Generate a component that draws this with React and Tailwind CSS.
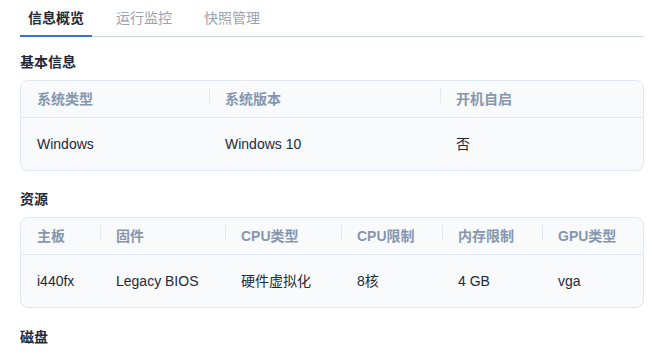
import React from "react";

const font = { fontFamily: '"Liberation Sans", "Noto Sans CJK SC", sans-serif' };

function Card({ cols, headers, values }) {
  return (
    <div className="rounded-lg border border-[#e2e8f0] bg-[#f8fafc]">
      <div className={`grid ${cols} h-[37px] border-b border-[#e2e8f0] items-center`}>
        {headers.map((h, i) => (
          <div key={h} className="relative px-4 text-[14px] leading-5 font-bold text-[#8696ad]">
            {i > 0 && <span className="absolute left-0 top-[-1px] h-[15px] w-px bg-[#e2e8f0]" />}
            {h}
          </div>
        ))}
      </div>
      <div className={`grid ${cols} h-[52px] items-center`}>
        {values.map((v, i) => (
          <div key={i} className="px-4 text-[14px] leading-5 text-[#1f2937]">
            {v}
          </div>
        ))}
      </div>
    </div>
  );
}

export default function App() {
  return (
    <div className="w-[666px] h-[356px] overflow-hidden bg-white pl-5 pr-[22px]" style={font}>
      <div className="flex border-b border-[#cbd5e1] gap-4">
        <div className="-mb-px px-2 pt-[10px] pb-[8px] leading-[17px] text-[14px] font-bold text-[#1f2937] border-b-2 border-[#2f72e0]">
          信息概览
        </div>
        <div className="-mb-px px-2 pt-[10px] pb-[8px] leading-[17px] text-[14px] text-[#9aa3ae] border-b-2 border-transparent">
          运行监控
        </div>
        <div className="-mb-px px-2 pt-[10px] pb-[8px] leading-[17px] text-[14px] text-[#9aa3ae] border-b-2 border-transparent">
          快照管理
        </div>
      </div>

      <div className="mt-[15px] mb-2 text-[14px] leading-5 font-bold text-[#1f2937]">基本信息</div>
      <Card
        cols="grid-cols-[188px_231px_1fr]"
        headers={["系统类型", "系统版本", "开机自启"]}
        values={["Windows", "Windows 10", "否"]}
      />

      <div className="mt-[18px] mb-2 text-[14px] leading-5 font-bold text-[#1f2937]">资源</div>
      <Card
        cols="grid-cols-[79px_125px_116px_101px_100px_1fr]"
        headers={["主板", "固件", "CPU类型", "CPU限制", "内存限制", "GPU类型"]}
        values={["i440fx", "Legacy BIOS", "硬件虚拟化", "8核", "4 GB", "vga"]}
      />

      <div className="mt-[19px] mb-2 text-[14px] leading-5 font-bold text-[#1f2937]">磁盘</div>
    </div>
  );
}
